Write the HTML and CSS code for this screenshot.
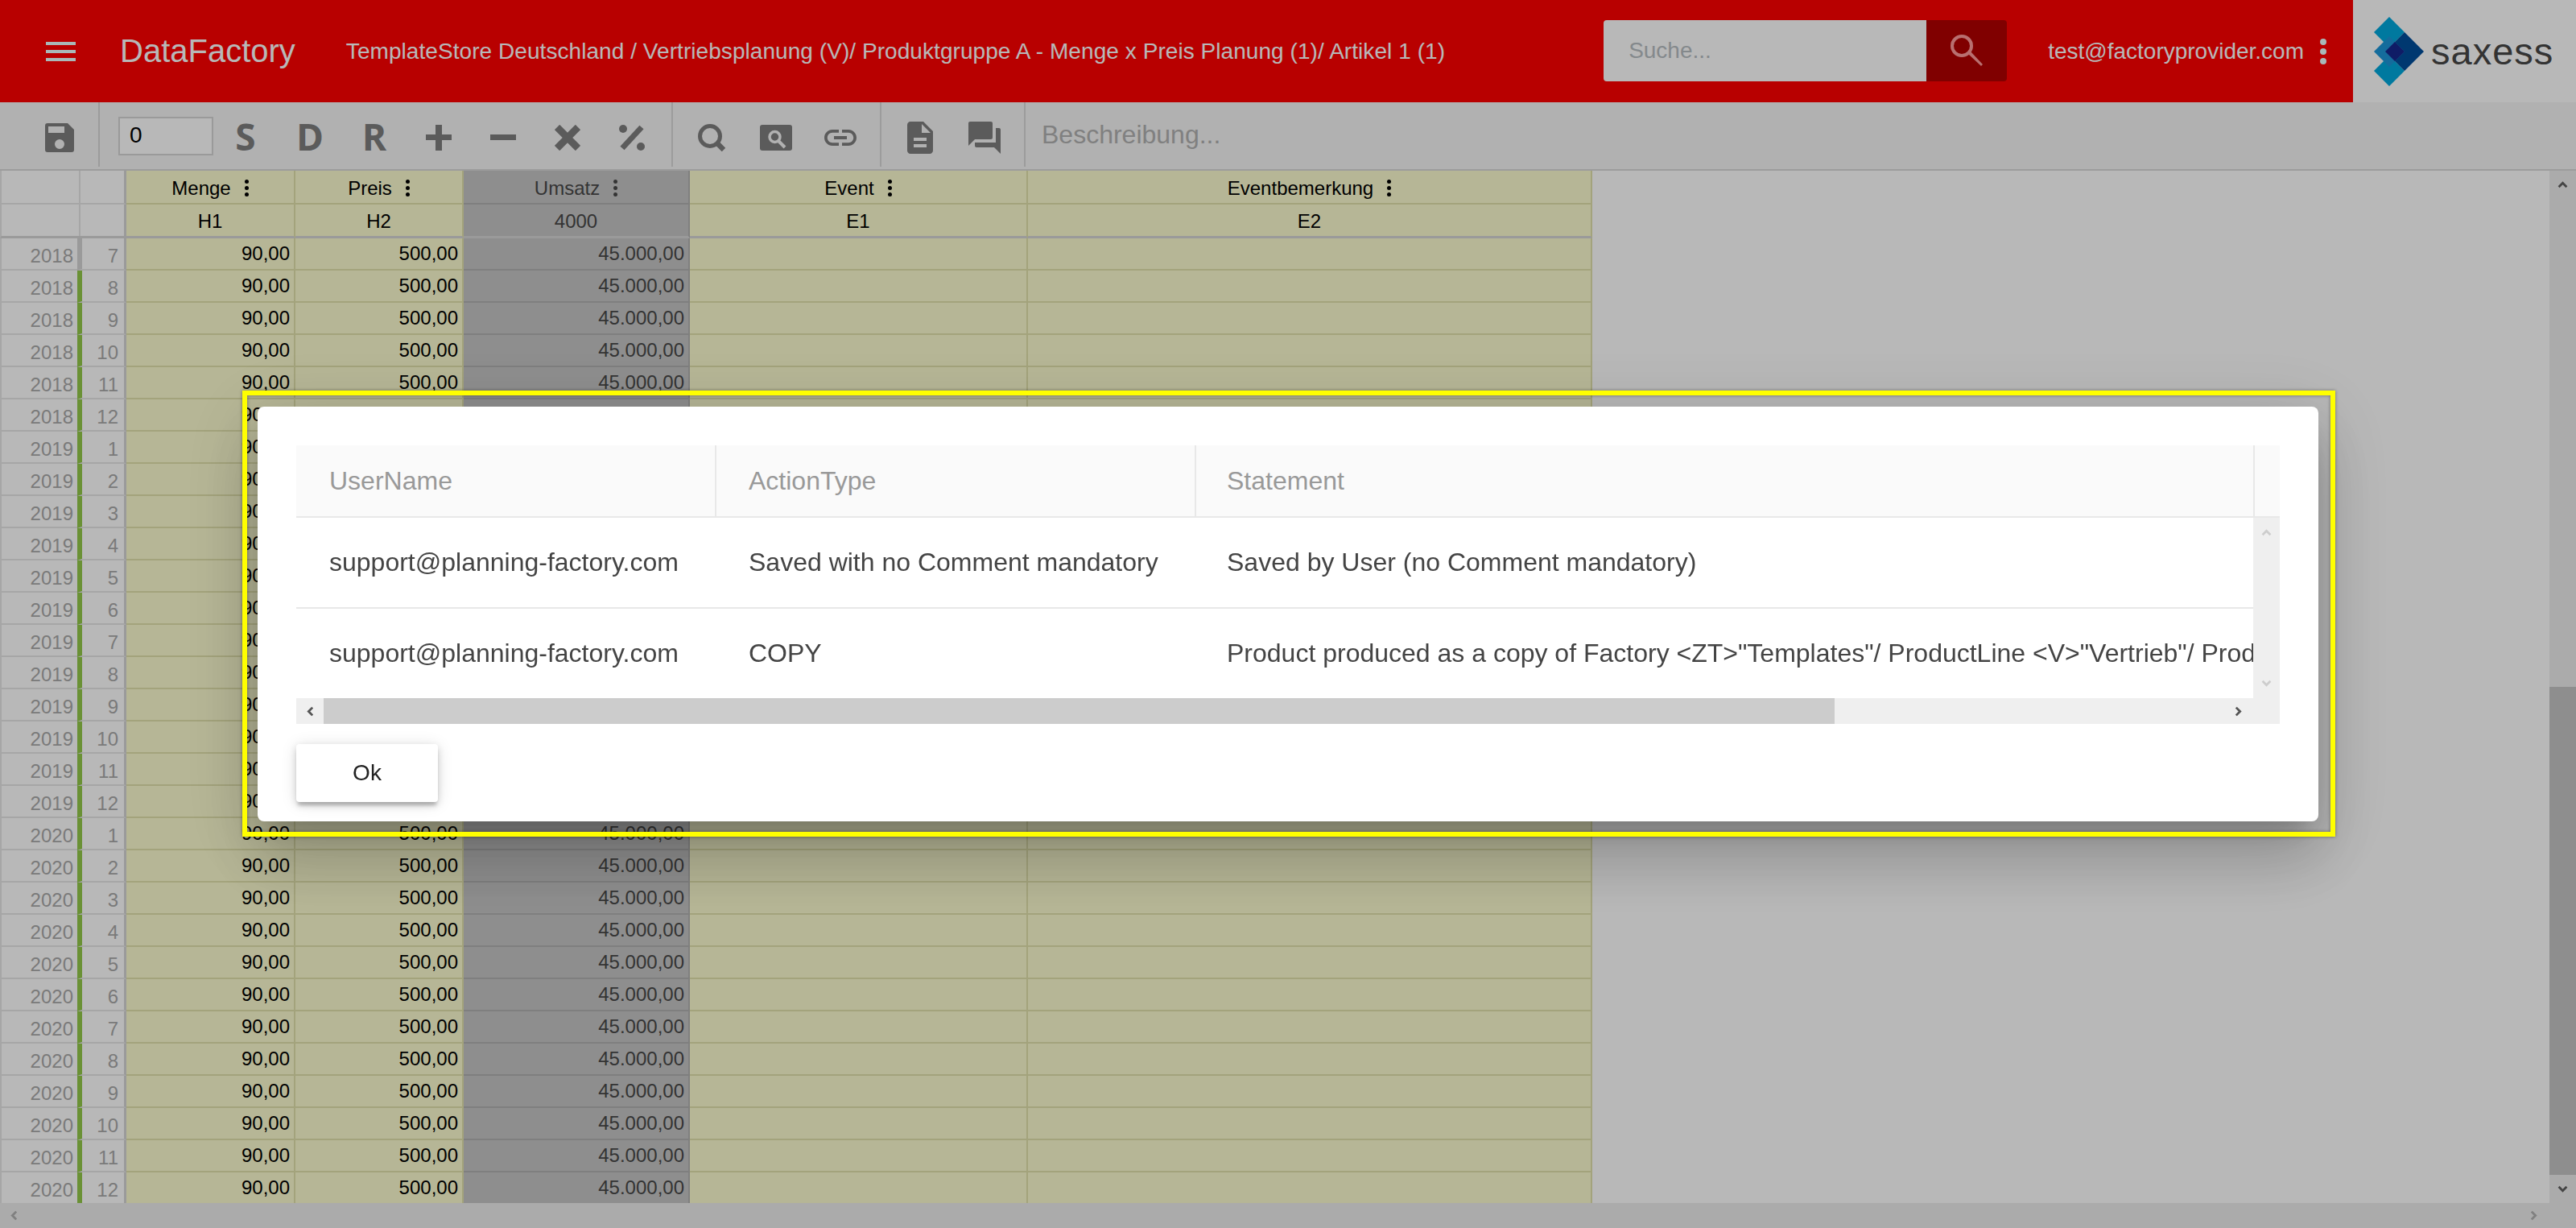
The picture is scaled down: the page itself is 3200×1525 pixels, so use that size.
FILE: index.html
```html
<!DOCTYPE html>
<html lang="de">
  <head>
    <meta charset="utf-8" />
    <title>DataFactory</title>
    <link rel="stylesheet" href="styles.css">
  </head>

  <body>
    <svg class="sprite" aria-hidden="true">
      <symbol id="chev" viewBox="0 0 12 12">
        <path d="M1.5 8.5 L6 4 L10.5 8.5" fill="none" stroke="currentColor" stroke-width="2.6" />
      </symbol>
      <symbol id="lens" viewBox="0 0 34 34">
        <circle cx="15" cy="15" r="12.5" fill="none" stroke="#7f7f7f" stroke-width="5" />
        <path d="M24 24 L32 32" stroke="#7f7f7f" stroke-width="6.5" />
      </symbol>
    </svg>

    <header class="topbar">
      <div class="burger"><span></span><span></span><span></span></div>
      <div class="brand">DataFactory</div>
      <div class="crumb">TemplateStore Deutschland / Vertriebsplanung (V)/ Produktgruppe A - Menge x Preis Planung (1)/ Artikel 1 (1)</div>
      <div class="search">
        <input class="search-input" type="text" placeholder="Suche...">
        <div class="search-btn">
          <svg width="42" height="42" viewBox="0 0 42 42">
            <circle cx="15" cy="15" r="12" fill="none" stroke="#ff9b9b" stroke-width="4" />
            <path d="M23 25 L39 40 L41 38 L26 22 Z" fill="#ff9b9b" />
          </svg>
        </div>
      </div>
      <div class="user">test@factoryprovider.com</div>
      <div class="user-menu"><span class="dots dots-big"></span></div>
      <div class="logo">
        <svg width="62" height="86" viewBox="0 0 62 86">
          <polygon points="19,0 38,19 19,38 0,19" fill="#00a8dd" />
          <polygon points="19,48 38,67 19,86 0,67" fill="#00a8dd" />
          <polygon points="38,19 62,43 38,67 14,43" fill="#004e9c" />
          <polygon points="19,24 38,43 19,62 0,43" fill="#1c96d9" />
          <polygon points="26,31 38,43 26,55 14,43" fill="#16278e" />
        </svg>
        <span class="logo-text">saxess</span>
      </div>
    </header>

    <nav class="toolbar">
      <div class="group group-save">
        <div class="tool">
          <svg width="36" height="36" viewBox="0 0 36 36">
            <path fill-rule="evenodd" d="M3 0 H28 L36 8 V33 a3 3 0 0 1 -3 3 H3 a3 3 0 0 1 -3 -3 V3 a3 3 0 0 1 3 -3 Z M4 4 V12 H24 V4 Z M18 20 a6 6 0 1 0 0 12 a6 6 0 1 0 0 -12 Z" />
          </svg>
        </div>
      </div>
      <div class="group group-calc">
        <input class="factor" type="text" value="0">
        <div class="tool tool-letter">S</div>
        <div class="tool tool-letter">D</div>
        <div class="tool tool-letter">R</div>
        <div class="tool">
          <svg width="32" height="32" viewBox="0 0 32 32"><path d="M12 0 H20 V12 H32 V19 H20 V32 H12 V19 H0 V12 H12 Z" /></svg>
        </div>
        <div class="tool">
          <svg width="32" height="32" viewBox="0 0 32 32"><rect x="0" y="12" width="32" height="7" /></svg>
        </div>
        <div class="tool">
          <svg width="32" height="32" viewBox="0 0 32 32"><path d="M3 3 L29 29 M29 3 L3 29" stroke-width="9" class="stroke" /></svg>
        </div>
        <div class="tool">
          <svg width="34" height="32" viewBox="0 0 34 32">
            <circle cx="6" cy="5" r="5" /><circle cx="28" cy="27" r="5" />
            <path d="M29 3 L5 29" stroke-width="7" class="stroke" />
          </svg>
        </div>
      </div>
      <div class="group group-find">
        <div class="tool"><svg width="34" height="34"><use href="#lens" /></svg></div>
        <div class="tool">
          <svg width="40" height="32" viewBox="0 0 40 32">
            <rect width="40" height="32" rx="3" />
            <circle cx="18.5" cy="15" r="6.5" fill="none" stroke="#f5f5f5" stroke-width="3.5" />
            <path d="M23 20 L31 28" stroke="#f5f5f5" stroke-width="4" />
          </svg>
        </div>
        <div class="tool">
          <svg width="40" height="20" viewBox="2 7 20 10">
            <path d="M3.9 12c0-1.71 1.39-3.1 3.1-3.1h4V7H7c-2.76 0-5 2.24-5 5s2.24 5 5 5h4v-1.9H7c-1.71 0-3.1-1.39-3.1-3.1zM8 13h8v-2H8v2zm9-6h-4v1.9h4c1.71 0 3.1 1.39 3.1 3.1s-1.39 3.1-3.1 3.1h-4V17h4c2.76 0 5-2.24 5-5s-2.24-5-5-5z" />
          </svg>
        </div>
      </div>
      <div class="group group-notes">
        <div class="tool">
          <svg width="32" height="40" viewBox="4 2 16 20">
            <path d="M14 2H6c-1.1 0-1.99.9-1.99 2L4 20c0 1.1.89 2 1.99 2H18c1.1 0 2-.9 2-2V8l-6-6zm2 16H8v-2h8v2zm0-4H8v-2h8v2zm-3-5V3.5L18.5 9H13z" />
          </svg>
        </div>
        <div class="tool">
          <svg width="40" height="40" viewBox="2 2 20 20">
            <path d="M21 6h-2v9H6v2c0 .55.45 1 1 1h11l4 4V7c0-.55-.45-1-1-1zm-4 6V3c0-.55-.45-1-1-1H3c-.55 0-1 .45-1 1v14l4-4h10c.55 0 1-.45 1-1z" />
          </svg>
        </div>
      </div>
      <div class="group group-desc">
        <input class="desc" type="text" placeholder="Beschreibung...">
      </div>
    </nav>

    <main class="workspace">
      <div class="sheet">
        <table class="grid">
          <colgroup>
            <col class="c-year"><col class="c-month"><col class="c-menge"><col class="c-preis"><col class="c-umsatz"><col class="c-event"><col class="c-note">
          </colgroup>
          <thead>
            <tr><th></th><th></th><th>Menge<span class="dots"></span></th><th>Preis<span class="dots"></span></th><th>Umsatz<span class="dots"></span></th><th>Event<span class="dots"></span></th><th>Eventbemerkung<span class="dots"></span></th></tr>
            <tr class="codes"><th></th><th></th><th>H1</th><th>H2</th><th>4000</th><th>E1</th><th>E2</th></tr>
          </thead>
          <tbody>
            <tr class="first"><td>2018</td><td>7</td><td>90,00</td><td>500,00</td><td>45.000,00</td><td></td><td></td></tr>
            <tr><td>2018</td><td>8</td><td>90,00</td><td>500,00</td><td>45.000,00</td><td></td><td></td></tr>
            <tr><td>2018</td><td>9</td><td>90,00</td><td>500,00</td><td>45.000,00</td><td></td><td></td></tr>
            <tr><td>2018</td><td>10</td><td>90,00</td><td>500,00</td><td>45.000,00</td><td></td><td></td></tr>
            <tr><td>2018</td><td>11</td><td>90,00</td><td>500,00</td><td>45.000,00</td><td></td><td></td></tr>
            <tr><td>2018</td><td>12</td><td>90,00</td><td>500,00</td><td>45.000,00</td><td></td><td></td></tr>
            <tr><td>2019</td><td>1</td><td>90,00</td><td>500,00</td><td>45.000,00</td><td></td><td></td></tr>
            <tr><td>2019</td><td>2</td><td>90,00</td><td>500,00</td><td>45.000,00</td><td></td><td></td></tr>
            <tr><td>2019</td><td>3</td><td>90,00</td><td>500,00</td><td>45.000,00</td><td></td><td></td></tr>
            <tr><td>2019</td><td>4</td><td>90,00</td><td>500,00</td><td>45.000,00</td><td></td><td></td></tr>
            <tr><td>2019</td><td>5</td><td>90,00</td><td>500,00</td><td>45.000,00</td><td></td><td></td></tr>
            <tr><td>2019</td><td>6</td><td>90,00</td><td>500,00</td><td>45.000,00</td><td></td><td></td></tr>
            <tr><td>2019</td><td>7</td><td>90,00</td><td>500,00</td><td>45.000,00</td><td></td><td></td></tr>
            <tr><td>2019</td><td>8</td><td>90,00</td><td>500,00</td><td>45.000,00</td><td></td><td></td></tr>
            <tr><td>2019</td><td>9</td><td>90,00</td><td>500,00</td><td>45.000,00</td><td></td><td></td></tr>
            <tr><td>2019</td><td>10</td><td>90,00</td><td>500,00</td><td>45.000,00</td><td></td><td></td></tr>
            <tr><td>2019</td><td>11</td><td>90,00</td><td>500,00</td><td>45.000,00</td><td></td><td></td></tr>
            <tr><td>2019</td><td>12</td><td>90,00</td><td>500,00</td><td>45.000,00</td><td></td><td></td></tr>
            <tr><td>2020</td><td>1</td><td>90,00</td><td>500,00</td><td>45.000,00</td><td></td><td></td></tr>
            <tr><td>2020</td><td>2</td><td>90,00</td><td>500,00</td><td>45.000,00</td><td></td><td></td></tr>
            <tr><td>2020</td><td>3</td><td>90,00</td><td>500,00</td><td>45.000,00</td><td></td><td></td></tr>
            <tr><td>2020</td><td>4</td><td>90,00</td><td>500,00</td><td>45.000,00</td><td></td><td></td></tr>
            <tr><td>2020</td><td>5</td><td>90,00</td><td>500,00</td><td>45.000,00</td><td></td><td></td></tr>
            <tr><td>2020</td><td>6</td><td>90,00</td><td>500,00</td><td>45.000,00</td><td></td><td></td></tr>
            <tr><td>2020</td><td>7</td><td>90,00</td><td>500,00</td><td>45.000,00</td><td></td><td></td></tr>
            <tr><td>2020</td><td>8</td><td>90,00</td><td>500,00</td><td>45.000,00</td><td></td><td></td></tr>
            <tr><td>2020</td><td>9</td><td>90,00</td><td>500,00</td><td>45.000,00</td><td></td><td></td></tr>
            <tr><td>2020</td><td>10</td><td>90,00</td><td>500,00</td><td>45.000,00</td><td></td><td></td></tr>
            <tr><td>2020</td><td>11</td><td>90,00</td><td>500,00</td><td>45.000,00</td><td></td><td></td></tr>
            <tr><td>2020</td><td>12</td><td>90,00</td><td>500,00</td><td>45.000,00</td><td></td><td></td></tr>
          </tbody>
        </table>
      </div>
      <div class="page-vbar">
        <div class="page-vbtn"><svg class="chev chev-up"><use href="#chev" /></svg></div>
        <div class="page-vthumb"></div>
        <div class="page-vbtn"><svg class="chev chev-down"><use href="#chev" /></svg></div>
      </div>
    </main>

    <div class="page-hbar">
      <svg class="chev chev-left"><use href="#chev" /></svg>
      <svg class="chev chev-right"><use href="#chev" /></svg>
    </div>

    <!-- dialog with the change log -->
    <div class="overlay">
      <div class="dialog">
        <div class="highlight"></div>
        <div class="log">
          <div class="log-head">
            <div class="col-user">UserName</div>
            <div class="col-action">ActionType</div>
            <div class="col-statement">Statement</div>
          </div>
          <div class="log-middle">
            <div class="log-rows">
              <div class="log-row">
                <div class="col-user">support@planning-factory.com</div>
                <div class="col-action">Saved with no Comment mandatory</div>
                <div class="col-statement">Saved by User (no Comment mandatory)</div>
              </div>
              <div class="log-row">
                <div class="col-user">support@planning-factory.com</div>
                <div class="col-action">COPY</div>
                <div class="col-statement">Product produced as a copy of Factory &lt;ZT&gt;"Templates"/ ProductLine &lt;V&gt;"Vertrieb"/ Product &lt;A&gt;"Artikel 1"</div>
              </div>
            </div>
            <div class="log-vbar">
              <svg class="chev chev-up"><use href="#chev" /></svg>
              <svg class="chev chev-down"><use href="#chev" /></svg>
            </div>
          </div>
          <div class="log-hbar">
            <div class="log-hbtn"><svg class="chev chev-left"><use href="#chev" /></svg></div>
            <div class="log-hthumb"></div>
            <div class="log-hend"><svg class="chev chev-right"><use href="#chev" /></svg></div>
          </div>
        </div>
        <button class="ok" type="button">Ok</button>
      </div>
    </div>
  </body>
</html>
```

FILE: styles.css
```css
* {
  box-sizing: border-box;
}

html,
body {
  height: 100%;
}

body {
  margin: 0;
  display: flex;
  flex-direction: column;
  overflow: hidden;
  background: #fff;
  font-family: "Liberation Sans", Arial, sans-serif;
}

.sprite {
  display: none;
}

/* top bar */
.topbar {
  display: flex;
  align-items: center;
  flex: 0 0 127px;
  padding-left: 57px;
  background: #ff0000;
  color: #fff;
}

.burger {
  display: flex;
  flex-direction: column;
  justify-content: space-between;
  width: 37px;
  height: 24px;
}

.burger span {
  height: 4px;
  background: #ebffff;
}

.brand {
  margin-left: 55px;
  font-size: 40px;
}

.crumb {
  margin-left: 63px;
  font-size: 28px;
  letter-spacing: 0.06px;
  white-space: nowrap;
}

.search {
  display: flex;
  height: 76px;
  margin-left: auto;
  margin-top: -1px;
}

.search-input {
  width: 401px;
  padding: 0 0 0 31px;
  border: none;
  border-radius: 4px 0 0 4px;
  background: #fff;
  font: 28px "Liberation Sans", Arial, sans-serif;
}

.search-input::placeholder {
  color: #b8bec3;
  opacity: 1;
}

.search-btn {
  display: flex;
  align-items: center;
  justify-content: center;
  width: 100px;
  border-radius: 0 4px 4px 0;
  background: #b20000;
}

.user {
  margin-left: 51px;
  font-size: 28px;
}

.user-menu {
  display: flex;
  justify-content: center;
  width: 8px;
  margin-left: 20px;
  color: #ebffff;
}

.logo {
  display: flex;
  align-items: center;
  align-self: stretch;
  gap: 9px;
  width: 277px;
  margin-left: 33px;
  padding-left: 26px;
  background: #fff;
}

.logo-text {
  font-size: 47px;
  letter-spacing: 1px;
  color: #474747;
}

.dots {
  display: inline-block;
  width: 5px;
  height: 5px;
  margin-left: 17px;
  border-radius: 50%;
  background: currentColor;
  box-shadow: 0 -8px currentColor, 0 8px currentColor;
  vertical-align: 6px;
}

.dots-big {
  width: 8px;
  height: 8px;
  margin: 0;
  box-shadow: 0 -12px currentColor, 0 12px currentColor;
  vertical-align: middle;
}

/* toolbar */
.toolbar {
  display: flex;
  flex: 0 0 85px;
  background: #f5f5f5;
  border-bottom: 2px solid #d9d9d9;
  fill: #7f7f7f;
}

.group {
  display: flex;
  align-items: center;
  height: 80px;
  padding-top: 8px;
  border-left: 2px solid #d9d9d9;
}

.group-save {
  width: 122px;
  padding-left: 34px;
  border-left: none;
}

.group-calc {
  width: 712px;
  padding-left: 23px;
}

.group-find {
  width: 259px;
  padding-left: 8px;
}

.group-notes {
  width: 179px;
  padding-left: 8px;
}

.group-desc {
  flex: 1;
  padding-left: 20px;
}

.tool {
  display: flex;
  align-items: center;
  justify-content: center;
  flex: 0 0 80px;
}

.tool-letter {
  padding-bottom: 5px;
  font-family: "Open Sans", sans-serif;
  font-weight: 700;
  font-size: 46px;
  line-height: 1;
  color: #7f7f7f;
}

.stroke {
  stroke: #7f7f7f;
  fill: none;
}

.factor {
  width: 118px;
  height: 48px;
  margin-top: -4px;
  padding: 0 0 2px 12px;
  border: 2px solid #d6d6d6;
  background: #fff;
  font: 28px "Liberation Sans", Arial, sans-serif;
  color: #000;
}

.desc {
  width: 800px;
  height: 48px;
  margin-top: -8px;
  padding: 0;
  border: none;
  background: transparent;
  font: 32px "Liberation Sans", Arial, sans-serif;
}

.desc::placeholder {
  color: #b2b2b2;
  opacity: 1;
}

/* sheet */
.workspace {
  display: flex;
  flex: 1;
  min-height: 0;
}

.sheet {
  flex: 1;
  overflow: hidden;
}

.grid {
  width: 1978px;
  table-layout: fixed;
  border-collapse: separate;
  border-spacing: 0;
  font-size: 24px;
}

.c-year { width: 96px; }
.c-month { width: 61px; }
.c-menge { width: 210px; }
.c-preis { width: 209px; }
.c-umsatz { width: 281px; }
.c-event { width: 420px; }
.c-note { width: 701px; }

.grid th,
.grid td {
  height: 40px;
  padding: 0 5px 0 0;
  border-right: 2px solid #e2e2ac;
  border-bottom: 2px solid #e2e2ac;
  background: #fcfcd0;
  color: #000;
  font-weight: 400;
  white-space: nowrap;
}

.grid th {
  height: 42px;
  padding: 3px 0 0;
  text-align: center;
}

.grid td {
  text-align: right;
}

.grid tr > :nth-child(1),
.grid tr > :nth-child(2) {
  background: #fff;
  border-color: #e6e6e6;
  color: #aaa;
}

.grid tr > :nth-child(1) {
  border-left: 2px solid #e6e6e6;
  border-right: none;
  padding-top: 6px;
}

.grid tr > :nth-child(2) {
  border-right: 3px solid #d6d6d6;
  padding: 6px 7px 0 0;
}

.grid td:nth-child(2) {
  border-left: 6px solid #93c94a;
}

.grid .first td:nth-child(2) {
  border-left-color: #d6d6d6;
}

.grid th:nth-child(2) {
  box-shadow: inset 2px 0 #fff, inset 4px 0 #e6e6e6;
}

.grid tr > :nth-child(5) {
  background: #c5c5c5;
  border-color: #b0b0b0;
  color: #484848;
}

.grid .codes th {
  border-bottom: 3px solid #d6d6d6;
}

.page-vbar {
  display: flex;
  flex-direction: column;
  flex: 0 0 33px;
  background: #ededed;
  color: #5f5f5f;
}

.page-vbtn {
  display: flex;
  align-items: center;
  justify-content: center;
  flex: 0 0 35px;
}

.page-vthumb {
  height: 606px;
  margin-top: auto;
  background: #c5c5c5;
}

.page-hbar {
  display: flex;
  align-items: center;
  justify-content: space-between;
  flex: 0 0 31px;
  padding: 0 46px 0 11px;
  background: #ededed;
  color: #b2b2b2;
}

.chev {
  display: block;
  width: 13px;
  height: 13px;
}

.chev-down { transform: rotate(180deg); }
.chev-left { transform: rotate(-90deg); }
.chev-right { transform: rotate(90deg); }

/* dialog */
.overlay {
  position: fixed;
  inset: 0;
  display: flex;
  align-items: center;
  justify-content: center;
  background: rgba(0, 0, 0, 0.28);
}

.dialog {
  position: relative;
  width: 2560px;
  height: 515px;
  padding: 48px 48px 24px;
  border-radius: 8px;
  background: #fff;
  box-shadow: 0 22px 30px -14px rgba(0, 0, 0, 0.2), 0 48px 76px 6px rgba(0, 0, 0, 0.14), 0 18px 92px 16px rgba(0, 0, 0, 0.12);
}

.highlight {
  position: absolute;
  top: -20px;
  left: -19px;
  right: -21px;
  bottom: -19px;
  border: 6px solid #ffff00;
  box-shadow: 0 0 4px rgba(0, 0, 0, 0.4), inset 0 0 4px rgba(0, 0, 0, 0.4);
  pointer-events: none;
}

.log {
  font-size: 32px;
  color: #444;
}

.log-head {
  display: flex;
  align-items: stretch;
  height: 90px;
  background: #fafafa;
  border-bottom: 2px solid #e8e8e8;
  color: #999;
}

.log-head > div {
  display: flex;
  align-items: center;
  border-right: 2px solid #e8e8e8;
}

.col-user {
  flex: 0 0 522px;
  padding-left: 41px;
}

.col-action {
  flex: 0 0 596px;
  padding-left: 40px;
}

.col-statement {
  flex: 0 0 1315px;
  padding-left: 38px;
  white-space: nowrap;
}

.log-middle {
  display: flex;
  height: 224px;
}

.log-rows {
  flex: 0 0 2431px;
  overflow: hidden;
}

.log-row {
  display: flex;
  align-items: center;
  height: 113px;
  border-bottom: 2px solid #e8e8e8;
}

.log-row:last-child {
  height: 111px;
  border-bottom: none;
}

.log-vbar {
  display: flex;
  flex-direction: column;
  align-items: center;
  justify-content: space-between;
  flex: 1;
  padding: 12px 0 12px;
  background: #efefef;
  color: #cdcdcd;
}

.log-hbar {
  display: flex;
  height: 32px;
  background: #efefef;
  color: #555;
}

.log-hbtn {
  display: flex;
  align-items: center;
  justify-content: center;
  flex: 0 0 34px;
}

.log-hthumb {
  flex: 0 0 1877px;
  background: #ccc;
}

.log-hend {
  display: flex;
  align-items: center;
  flex: 1;
  padding-left: 495px;
}

.ok {
  display: block;
  width: 176px;
  height: 72px;
  margin-top: 25px;
  border: none;
  border-radius: 4px;
  background: #fff;
  color: #222;
  font: 28px "Liberation Sans", Arial, sans-serif;
  box-shadow: 0 6px 4px -2px rgba(0, 0, 0, 0.2), 0 4px 10px 0 rgba(0, 0, 0, 0.14), 0 2px 20px 0 rgba(0, 0, 0, 0.12);
}
```
